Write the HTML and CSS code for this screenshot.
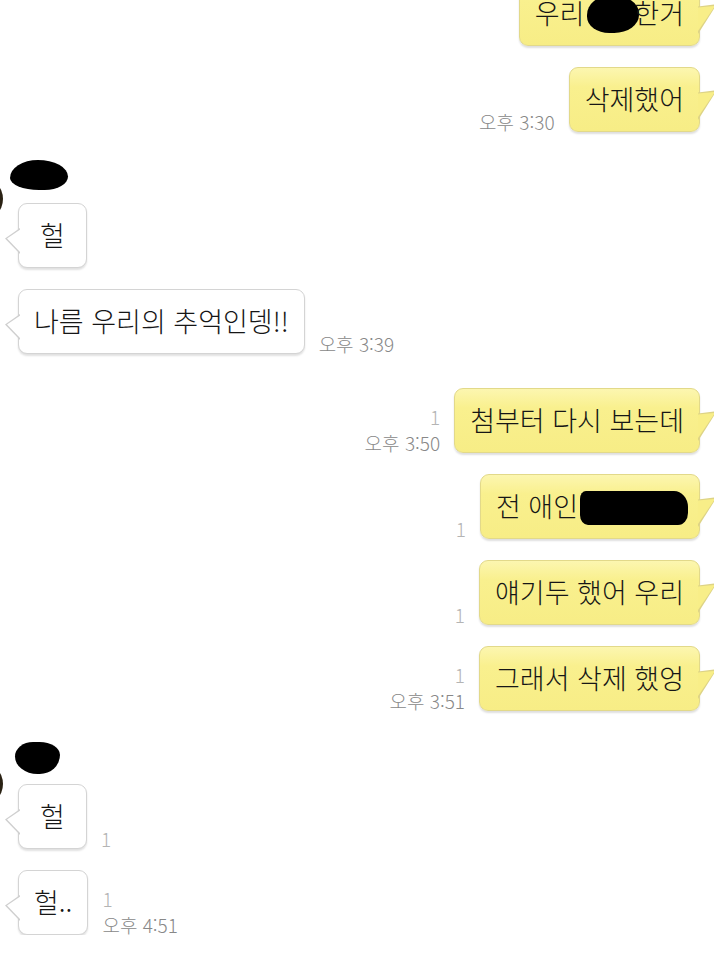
FILE: index.html
```html
<!DOCTYPE html>
<html lang="ko">
  <head>
    <meta charset="UTF-8" />
    <meta name="viewport" content="width=device-width, initial-scale=1.0" />
    <title>채팅</title>
    <link rel="stylesheet" href="styles.css">
  </head>
  <body>
    <div class="chat">
      <div class="row me first">
        <div class="bubble">우리 <span class="scribble s-word"></span>한거</div>
      </div>
      <div class="row me">
        <div class="meta"><span>오후 3:30</span></div>
        <div class="bubble">삭제했어</div>
      </div>

      <div class="group g1">
        <div class="avatar"></div>
        <div class="col">
          <div class="name"><span class="scribble s-name1"></span></div>
          <div class="row you">
            <div class="bubble">헐</div>
          </div>
          <div class="row you">
            <div class="bubble">나름 우리의 추억인뎅!!</div>
            <div class="meta"><span>오후 3:39</span></div>
          </div>
        </div>
      </div>

      <div class="row me after-group">
        <div class="meta"><span class="read">1</span><span>오후 3:50</span></div>
        <div class="bubble">첨부터 다시 보는데</div>
      </div>
      <div class="row me">
        <div class="meta"><span class="read">1</span></div>
        <div class="bubble">전 애인<span class="scribble s-long"></span></div>
      </div>
      <div class="row me">
        <div class="meta"><span class="read">1</span></div>
        <div class="bubble">얘기두 했어 우리</div>
      </div>
      <div class="row me">
        <div class="meta"><span class="read">1</span><span>오후 3:51</span></div>
        <div class="bubble">그래서 삭제 했엉</div>
      </div>

      <div class="group g2">
        <div class="avatar"></div>
        <div class="col">
          <div class="name"><span class="scribble s-name2"></span></div>
          <div class="row you">
            <div class="bubble">헐</div>
            <div class="meta"><span class="read">1</span></div>
          </div>
          <div class="row you">
            <div class="bubble">헐..</div>
            <div class="meta"><span class="read">1</span><span>오후 4:51</span></div>
          </div>
        </div>
      </div>
    </div>
  </body>
</html>
```

FILE: styles.css
```css
body {
  margin: 0;
  background: #fff;
  font-family: "Noto Sans CJK KR", "Noto Sans", sans-serif;
  overflow: hidden;
}
.chat {
  display: flex;
  flex-direction: column;
  margin-top: -19px;
}
.row {
  display: flex;
  align-items: flex-end;
  margin-top: 21px;
}
.row.first {
  margin-top: 0;
}
.row.me {
  justify-content: flex-end;
  padding-right: 14px;
}
.row.after-group {
  margin-top: 34px;
}
.bubble {
  position: relative;
  box-sizing: border-box;
  height: 65px;
  min-width: 69px;
  padding: 0 15px 2px;
  display: flex;
  align-items: center;
  justify-content: center;
  font-size: 27px;
  font-weight: 300;
  color: #161616;
  border-radius: 9px;
  white-space: nowrap;
}
.me .bubble {
  background: linear-gradient(#fcf6b0, #f9f08e 30%, #f7ed86);
  border: 1px solid #e2d98a;
  box-shadow: 0 2px 2px rgba(0, 0, 0, 0.13);
}
.me .bubble::before,
.me .bubble::after {
  content: "";
  position: absolute;
}
.me .bubble::before {
  right: -18px;
  top: 22px;
  width: 19px;
  height: 30px;
  background: #ddd386;
  clip-path: polygon(0 8%, 100% 0, 0 100%);
}
.me .bubble::after {
  right: -16px;
  top: 24px;
  width: 17px;
  height: 25px;
  background: #f8ee88;
  clip-path: polygon(0 6%, 100% 0, 0 100%);
}
.you .bubble {
  background: #fff;
  border: 1px solid #d4d4d4;
  box-shadow: 0 2px 2px rgba(0, 0, 0, 0.12);
}
.you .bubble::before,
.you .bubble::after {
  content: "";
  position: absolute;
}
.you .bubble::before {
  left: -14px;
  top: 24px;
  width: 15px;
  height: 26px;
  background: #cfcfcf;
  clip-path: polygon(100% 0, 0 40%, 100% 100%);
}
.you .bubble::after {
  left: -12px;
  top: 25px;
  width: 14px;
  height: 24px;
  background: #fff;
  clip-path: polygon(100% 0, 0 40%, 100% 100%);
}
.meta {
  display: flex;
  flex-direction: column;
  align-items: flex-end;
  margin: 0 14px -3px 0;
  font-size: 19px;
  font-weight: 300;
  line-height: 26px;
  color: #888;
  white-space: nowrap;
}
.you .meta {
  align-items: flex-start;
  margin: 0 0 -3px 14px;
}
.read {
  color: #b4b4b4;
}
.group {
  display: flex;
  align-items: flex-start;
}
.g1 {
  margin-top: 28px;
}
.g2 {
  margin-top: 31px;
}
.avatar {
  flex: none;
  width: 44px;
  height: 44px;
  margin-left: -41px;
  margin-top: 17px;
  border-radius: 50%;
  background: radial-gradient(circle at 92% 50%, #2a2214 62%, #7d6a3c 78%, #fff 96%);
}
.g2 .avatar {
  margin-top: 20px;
}
.col {
  display: flex;
  flex-direction: column;
  margin-left: 15px;
}
.col .row:nth-child(2) {
  margin-top: 13px;
}
.g2 .col .row:nth-child(2) {
  margin-top: 10px;
}
.name {
  height: 30px;
  display: flex;
}
.g2 .name {
  height: 32px;
}
.scribble {
  display: inline-block;
  flex: none;
  background: #000;
}
.s-name1 {
  width: 58px;
  height: 30px;
  margin-left: -8px;
  border-radius: 48% 52% 40% 50% / 60% 55% 45% 40%;
}
.s-name2 {
  width: 45px;
  height: 32px;
  margin-left: -3px;
  border-radius: 40% 45% 45% 50% / 45% 40% 60% 55%;
}
.s-word {
  width: 52px;
  height: 38px;
  margin: 0 -5px -2px 3px;
  border-radius: 50% 55% 50% 45% / 55% 50% 50% 45%;
}
.s-long {
  width: 108px;
  height: 34px;
  margin: 4px -4px 0 2px;
  border-radius: 6px 14px 10px 8px / 8px 16px 12px 10px;
}
```
